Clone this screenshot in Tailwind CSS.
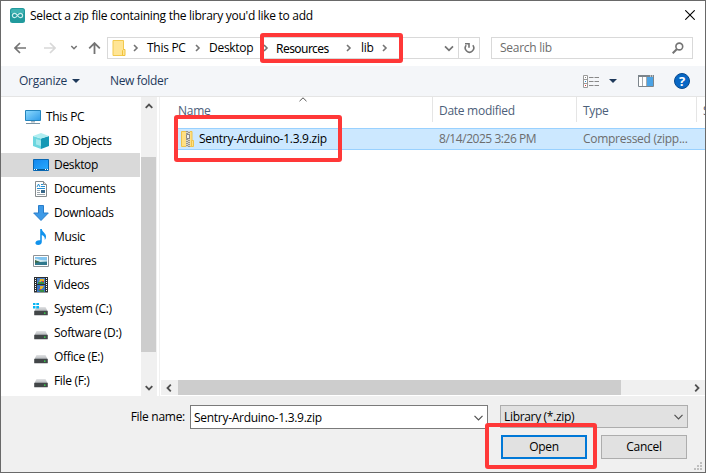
<!DOCTYPE html>
<html lang="en">
<head>
<meta charset="utf-8">
<title>Select a zip file</title>
<script src="https://cdn.jsdelivr.net/npm/@tailwindcss/browser@4"></script>
</head>
<body class="overflow-hidden">
<svg class="absolute size-0">
  <defs>
    <linearGradient id="blue" x1="0" y1="0" x2="1" y2="1"><stop stop-color="#1286ee"/><stop offset="1" stop-color="#2aacff"/></linearGradient>
    <linearGradient id="screen" x1="0" y1="0" x2="1" y2="1"><stop stop-color="#8edbff"/><stop offset="1" stop-color="#2e9be8"/></linearGradient>
    <linearGradient id="metal" x1="0" y1="0" x2="0" y2="1"><stop stop-color="#e2e3e5"/><stop offset="1" stop-color="#b4b7ba"/></linearGradient>
    <symbol id="drive" viewBox="0 0 16 16"><path d="M3.500 6h9l2 4h-13z" fill="url(#metal)"/><rect x="1.200" y="9.800" width="13.600" height="4.500" rx=".6" fill="#424648"/><rect x="11" y="11.500" width="1.500" height="1.300" fill="#35e84a"/></symbol>
    <symbol id="chev" viewBox="0 0 6 8"><path d="M1 1l3 3-3 3" fill="none" stroke="#747474" stroke-width="1.600"/></symbol>
  </defs>
</svg>
<div class="relative flex h-[473px] w-[706px] flex-col overflow-hidden border border-[#696969] bg-white font-['Open_Sans','Noto_Sans',sans-serif] text-[12px] leading-[16px] tracking-[-0.28px] whitespace-nowrap text-black">
  <header class="flex h-[31px] shrink-0 items-start pt-[7px] pl-[9px]">
    <svg width="15" height="15" viewBox="0 0 15 15"><rect width="15" height="15" rx="2.500" fill="#219a9d"/><path d="M1 3a2 2 0 012-2h9a2 2 0 012 2v2H1z" fill="#3fb2b2"/><path d="M7.500 7.500C6.500 6 5.700 5.300 4.600 5.300a2.200 2.200 0 000 4.400c1.100 0 1.900-.7 2.900-2.200s1.800-2.200 2.900-2.200a2.200 2.200 0 010 4.400c-1.100 0-1.900-.7-2.900-2.200z" fill="none" stroke="#c9eded" stroke-width="1.200"/></svg>
    <h1 class="ml-[5px]">Select a zip file containing the library you'd like to add</h1>
    <svg class="mt-[2px] mr-[10px] ml-auto" width="10" height="10" viewBox="0 0 10 10"><path d="M.3.300l9.400 9.400M9.700.300L.3 9.700" stroke="#000" stroke-width="1.100"/></svg>
  </header>
  <nav class="flex h-[34px] shrink-0 items-start pt-[5px]">
    <div class="flex h-[22px] w-[106px] items-center pl-[13px]">
      <svg width="12" height="12" viewBox="0 0 12 12"><path d="M12 6H1.200M6 1L1 6l5 5" fill="none" stroke="#747474" stroke-width="1.700"/></svg>
      <svg class="ml-[18px]" width="12" height="12" viewBox="0 0 12 12"><path d="M0 6h10.800M6 1l5 5-5 5" fill="none" stroke="#d8d8d8" stroke-width="1.700"/></svg>
      <svg class="ml-[14px]" width="8" height="6" viewBox="0 0 8 6"><path d="M1.300 1L4 3.700 6.700 1" fill="none" stroke="#747474" stroke-width="1.500"/></svg>
      <svg class="ml-[10px]" width="13" height="12" viewBox="0 0 13 12"><path d="M6.500 12V1.200M1.200 6.300l5.300-5.200 5.300 5.200" fill="none" stroke="#747474" stroke-width="1.800"/></svg>
    </div>
    <div class="flex h-[22px] w-[373px] items-center border border-[#d9d9d9]">
      <svg class="ml-[4px]" width="14" height="16" viewBox="0 0 14 16"><path d="M1 .5h10.500v15H1z" fill="#ffe595" stroke="#f2c94e"/><path d="M11.500 9.500H13v6h-2.500v-5z" fill="#ffe595" stroke="#f0c33c"/></svg>
      <svg class="ml-[7px]" width="6" height="8"><use href="#chev"/></svg>
      <span class="ml-[8px] w-[48px]">This PC</span>
      <svg width="6" height="8"><use href="#chev"/></svg>
      <span class="ml-[8px] w-[54px]">Desktop</span>
      <svg width="6" height="8"><use href="#chev"/></svg>
      <span class="ml-[7px] w-[70px] pt-[2px] font-['Noto_Sans','Open_Sans',sans-serif] tracking-[-0.55px]">Resources</span>
      <svg width="6" height="8"><use href="#chev"/></svg>
      <span class="ml-[9px] w-[21px]">lib</span>
      <svg width="6" height="8"><use href="#chev"/></svg>
      <svg class="mr-[4px] ml-auto" width="10" height="7" viewBox="0 0 10 7"><path d="M1 1.300l4 4 4-4" fill="none" stroke="#747474" stroke-width="1.700"/></svg>
      <div class="flex h-full w-[21px] items-center justify-center border-l border-[#d9d9d9]">
        <svg width="11" height="12" viewBox="0 0 11 12"><path d="M8.800 3.300A4.200 4.200 0 112.200 3.300" fill="none" stroke="#747474" stroke-width="1.600"/><path d="M1 1.700h4v4" fill="none" stroke="#747474" stroke-width="1.600"/></svg>
      </div>
    </div>
    <div class="ml-[11px] flex h-[22px] w-[202px] items-center border border-[#d9d9d9] pr-[8px] pl-[8px] text-[#6d6d6d]">
      <span>Search lib</span>
      <svg class="ml-auto" width="12" height="12" viewBox="0 0 12 12"><circle cx="7.300" cy="4.500" r="3.400" fill="none" stroke="#747474" stroke-width="1.600"/><path d="M5 7L.700 11.300" stroke="#747474" stroke-width="2"/></svg>
    </div>
  </nav>
  <div class="flex h-[31px] shrink-0 items-center border-b border-[#e5e5e5] bg-[#f4f6f9] pl-[18px] text-[#1e395b]">
    <span class="w-[53px]">Organize</span>
    <svg width="8" height="4" viewBox="0 0 8 4"><path d="M0 0h8L4 4z" fill="#1e395b"/></svg>
    <span class="ml-[30px] tracking-[-0.35px]">New folder</span>
    <svg class="ml-auto" width="17" height="13" viewBox="0 0 17 13"><path d="M.5.500h4v12h-4zM.5 4.500h4M.5 8.500h4" fill="#fff" stroke="#9a9a9a"/><path d="M6 2.500h4.500M11.500 2.500H16M6 6.500h4.500M11.500 6.500H16M6 10.500h4.500M11.500 10.500H16" stroke="#898989"/><path d="M2 2h1v1H2z" fill="#888"/><path d="M2 6h1v1H2z" fill="#288fe0"/><path d="M2 10h1v1H2z" fill="#d33"/></svg>
    <svg class="ml-[9px]" width="8" height="4" viewBox="0 0 8 4"><path d="M0 0h8L4 4z" fill="#1e395b"/></svg>
    <svg class="ml-[21px]" width="16" height="12" viewBox="0 0 16 12"><path d="M.5.500h15v11H.5z" fill="#fff" stroke="#7c858c"/><path d="M0 0h16v2H0z" fill="#7c858c"/><path d="M4.500 2v9M8.500 2v9" stroke="#a5aaae"/><path d="M9 2h6v9H9z" fill="#4ba3e5"/><path d="M12 .5h1v1h-1zM14 .5h1v1h-1z" fill="#fff"/></svg>
    <div class="mr-[15px] ml-[20px] flex size-[16px] items-center justify-center rounded-full border border-[#084a8d] bg-[#0867c5] text-[13px] leading-[14px] font-bold tracking-normal text-white">?</div>
  </div>
  <main class="flex h-[299px] shrink-0">
    <aside class="w-[140px] shrink-0 pt-[8px] tracking-[-0.33px] [&>div]:flex [&>div]:h-[24px] [&>div]:w-[139px] [&>div]:items-center [&>div]:gap-[5px] [&>div]:pl-[32px]">
      <div class="!pl-[24px]"><svg width="16" height="16" viewBox="0 0 16 16"><path d="M.5 1.500h15v10H.5z" fill="url(#screen)" stroke="#2484bc"/><path d="M6 12h4v1.500H6z" fill="#a8b6c0"/><path d="M1 14.500h14" stroke="#7793a5"/></svg>This PC</div>
      <div><svg width="16" height="16" viewBox="0 0 16 16"><path d="M0 3l8 2.500V16l-8-3z" fill="#6cd6df"/><path d="M8 5.500L16 3v10l-8 3z" fill="#1599b5"/><path d="M0 3l8-3 8 3-8 2.500z" fill="#b0eef1"/><path d="M3 6l5 1.500V13l-5-1.500z" fill="#a4e8ec"/></svg>3D Objects</div>
      <div class="bg-[#d9d9d9]"><svg width="16" height="16" viewBox="0 0 16 16"><path d="M.5 2.500h15v11H.5z" fill="url(#blue)" stroke="#0867b2"/><path d="M1 12.500h14" stroke="#075894"/><path d="M1 12.500h1M3 12.500h1M12 12.500h1M14 12.500h1" stroke="#fff"/></svg>Desktop</div>
      <div><svg width="16" height="16" viewBox="0 0 16 16"><path d="M2.500.500h8l3 3v12h-11z" fill="#fff" stroke="#858b8e"/><path d="M10.500.500v3h3" fill="#ddd" stroke="#858b8e"/><path d="M4 6l1.500-3L7 6M8 3.500h2M8 5.500h4M4 7.500h8" fill="none" stroke="#258ed2"/><path d="M4 9.500h3M4 11.500h3M4 13.500h8" stroke="#9ca6ac"/><path d="M8 9h4v3H8z" fill="#37678a"/></svg>Documents</div>
      <div><svg width="16" height="16" viewBox="0 0 16 16"><path d="M5.500.500h5V8h4.800L8 15.500.700 8h4.800z" fill="#3d9ae7" stroke="#297dca"/></svg>Downloads</div>
      <div><svg width="16" height="16" viewBox="0 0 16 16"><path d="M7.200 0h1.600c.2 3 4.200 4 4.200 7.500 0 1.500-.5 2.500-1.200 3.500.2-3-.8-4.300-3-5v7c0 1.800-1.700 3-3.700 3C3.500 16 2.400 15.200 2.400 14c0-1.700 2.200-3.200 4.800-2.700z" fill="#1192ec"/></svg>Music</div>
      <div><svg width="16" height="16" viewBox="0 0 16 16"><path d="M.5 2.500h15v11H.5z" fill="#fff" stroke="#8d9296"/><path d="M2 4h12v8H2z" fill="#83c5f0"/><path d="M2 6c3-1 4 1 6 1l6 .5V9H2z" fill="#d8edf2"/><path d="M2 7.500l5 1.500 7-.5V12H2z" fill="#31798d"/><path d="M2 7l5 2-5 1z" fill="#416b46"/></svg>Pictures</div>
      <div><svg width="16" height="16" viewBox="0 0 16 16"><path d="M1 0h14v15.500H1z" fill="#2d3032"/><path d="M4 1h8v6H4z" fill="#4a82c9"/><path d="M4 8h8v7H4z" fill="#3974c4"/><path d="M7 2h4v2H8v2H6z" fill="#e9b72c"/><path d="M5 5h6v2H5z" fill="#378d42"/><path d="M7 9h4l-2 3H7z" fill="#e3b52e"/><path d="M9 4h2v1H9zM6 12h2v2H6z" fill="#d9402d"/><path d="M5 13h6v2H8z" fill="#378d42"/><path d="M2.500 1v14M13.500 1v14" stroke="#fff" stroke-dasharray="1 1"/></svg>Videos</div>
      <div><svg width="16" height="16" viewBox="0 0 16 16"><use href="#drive"/><path d="M0 2h2.500v2H0zM3.300 2H6v2H3.300zM0 5h2.500v2.500H0zM3.300 5H6v2.500H3.300z" fill="#08b5f3"/></svg>System (C:)</div>
      <div><svg width="16" height="16"><use href="#drive"/></svg>Software (D:)</div>
      <div><svg width="16" height="16"><use href="#drive"/></svg>Office (E:)</div>
      <div><svg width="16" height="16"><use href="#drive"/></svg>File (F:)</div>
    </aside>
    <div class="flex w-[16px] shrink-0 flex-col items-center bg-[#f0f0f0]">
      <svg class="mt-[6px] shrink-0" width="8" height="6" viewBox="0 0 8 6"><path d="M.7 4.800L4 1.500l3.300 3.300" fill="none" stroke="#505050" stroke-width="1.800"/></svg>
      <div class="mt-[48px] h-[195px] w-[15px] shrink-0 self-start bg-[#cdcdcd]"></div>
      <svg class="mt-[33px] shrink-0" width="8" height="6" viewBox="0 0 8 6"><path d="M.7 1.200L4 4.500l3.300-3.300" fill="none" stroke="#505050" stroke-width="1.800"/></svg>
    </div>
    <section class="ml-[2px] flex min-w-0 flex-1 flex-col border-l border-[#f0f0f0]">
      <div class="relative flex h-[25px] shrink-0 items-center pl-[18px] text-[#4c607a]">
        <svg class="absolute top-0 left-[139px]" width="8" height="5" viewBox="0 0 8 5"><path d="M.5 4.200L4 .8l3.500 3.400" fill="none" stroke="#555"/></svg>
        <span class="w-[254px] pt-[2px]">Name</span>
        <span class="flex h-full w-[144px] items-center border-l border-[#e5e5e5] pt-[2px] pl-[6px]">Date modified</span>
        <span class="flex h-full w-[120px] items-center border-l border-[#e5e5e5] pt-[2px] pl-[6px]">Type</span>
        <span class="flex h-full flex-1 items-center overflow-hidden border-l border-[#e5e5e5] pt-[2px] pl-[6px]">Size</span>
      </div>
      <div class="mt-[6px] ml-[18px] flex h-[22px] shrink-0 items-center overflow-hidden border-y border-[#99d1ff] bg-[#cce8ff] text-[#6d6d6d]">
        <svg class="ml-[3px]" width="16" height="16" viewBox="0 0 16 16"><path d="M.5.500h10.500v15H.5z" fill="#ffe083" stroke="#eec34b"/><path d="M10.500 9.500h2v6h-2z" fill="#ffe083" stroke="#eec34b"/><path d="M5 0h4v16H5z" fill="#d8d5c8"/><path d="M6 0v16M8 1v15" stroke="#555" stroke-dasharray="1 1"/><path d="M5.500 3.500h3v4h-3z" fill="#eee" stroke="#888"/></svg>
        <span class="ml-[2px] w-[240px] text-black">Sentry-Arduino-1.3.9.zip</span>
        <span class="w-[144px] tracking-[-0.45px]">8/14/2025 3:26 PM</span>
        <span>Compressed (zipp...</span>
      </div>
      <div class="mt-auto mb-[1px] ml-[1px] flex h-[15px] items-center bg-[#f0f0f0]">
        <svg class="ml-[5px]" width="6" height="8" viewBox="0 0 6 8"><path d="M4.800.700L1.500 4l3.300 3.300" fill="none" stroke="#505050" stroke-width="1.800"/></svg>
        <div class="ml-[6px] h-full w-[443px] bg-[#cdcdcd]"></div>
        <svg class="mr-[5px] ml-auto" width="6" height="8" viewBox="0 0 6 8"><path d="M1.200.700L4.500 4 1.200 7.300" fill="none" stroke="#505050" stroke-width="1.800"/></svg>
      </div>
    </section>
  </main>
  <footer class="flex min-h-0 flex-1 flex-col bg-[#f0f0f0] pt-[9px]">
    <div class="flex items-start">
      <label class="w-[189px] pt-[4px] pr-[5px] text-right">File name:</label>
      <div class="flex h-[24px] w-[298px] items-center border border-[#7a7a7a] bg-white pt-[2px] pr-[4px] pl-[3px]">Sentry-Arduino-1.3.9.zip<svg class="ml-auto" width="9" height="6" viewBox="0 0 9 6"><path d="M.5.800l4 4 4-4" fill="none" stroke="#505050" stroke-width="1.200"/></svg></div>
      <div class="ml-[12px] flex h-[23px] w-[188px] items-center border border-[#adadad] bg-[#e1e1e1] pt-[1px] pr-[4px] pl-[3px] tracking-[-0.33px]">Library (*.zip)<svg class="ml-auto" width="9" height="6" viewBox="0 0 9 6"><path d="M.5.800l4 4 4-4" fill="none" stroke="#505050" stroke-width="1.200"/></svg></div>
    </div>
    <div class="mt-[6px] flex pl-[500px]">
      <button class="h-[24px] w-[86px] border-2 border-[#0078d7] bg-[#e1e1e1]">Open</button>
      <button class="ml-[14px] h-[24px] w-[86px] border border-[#adadad] bg-[#e1e1e1]">Cancel</button>
      <svg class="mt-[27px] ml-[7px] shrink-0" width="9" height="9" viewBox="0 0 9 9"><path d="M6 0h2v2H6zM3 3h2v2H3zM6 3h2v2H6zM0 6h2v2H0zM3 6h2v2H3zM6 6h2v2H6z" fill="#bfbfbf"/></svg>
    </div>
  </footer>
  <div class="absolute top-[32px] left-[259px] h-[30px] w-[143px] rounded-[3px] border-4 border-[#ff3838]"></div>
  <div class="absolute top-[114px] left-[173px] h-[47px] w-[168px] rounded-[3px] border-4 border-[#ff3838]"></div>
  <div class="absolute top-[422px] left-[484px] h-[46px] w-[112px] rounded-[3px] border-4 border-[#ff3838]"></div>
</div>
</body>
</html>
